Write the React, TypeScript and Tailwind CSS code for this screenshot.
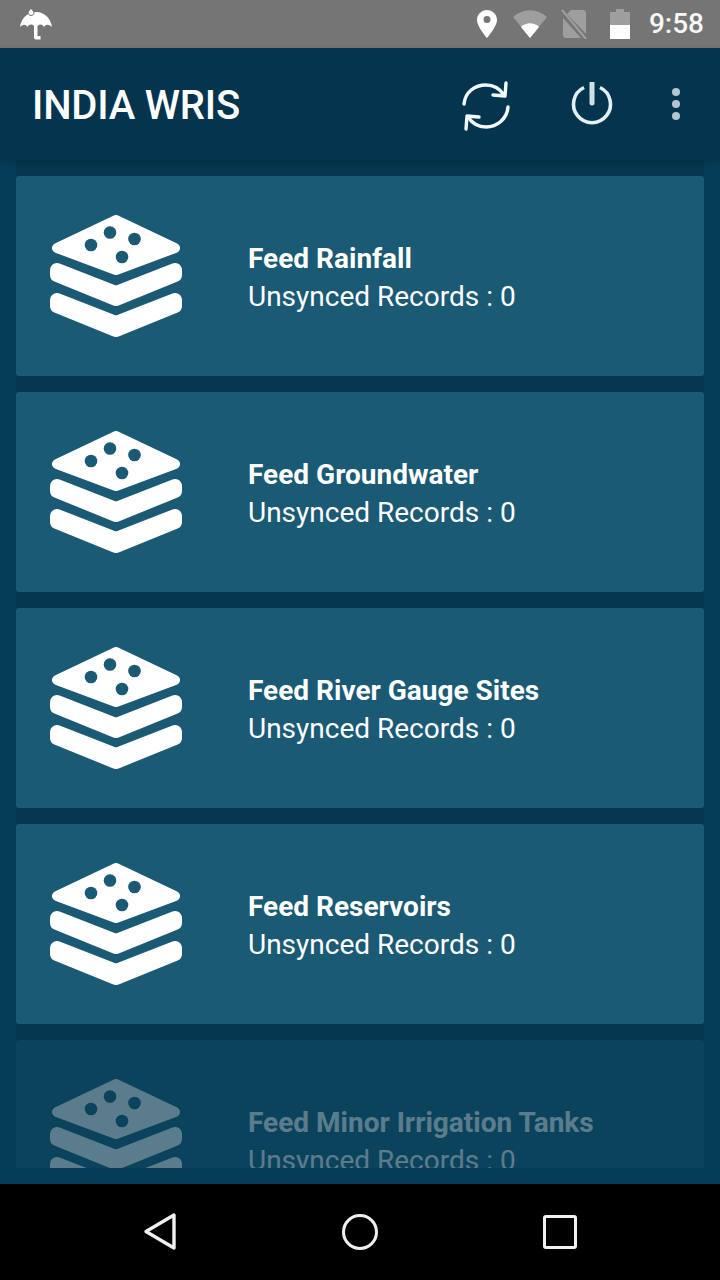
const feeds = [
  { title: "Feed Rainfall" },
  { title: "Feed Groundwater" },
  { title: "Feed River Gauge Sites" },
  { title: "Feed Reservoirs" },
  { title: "Feed Minor Irrigation Tanks", faded: true },
];

function LayersIcon() {
  return (
    <svg width="132" height="122" viewBox="0 0 132 122" className="shrink-0">
      <path d="M66 5 L125 33 L66 55 L7 33 Z" fill="#fff" stroke="#fff" strokeWidth="10" strokeLinejoin="round" />
      <circle cx="41" cy="30" r="6.3" fill="#1a5a75" />
      <circle cx="60" cy="17.5" r="6.3" fill="#1a5a75" />
      <circle cx="84.5" cy="24" r="6.3" fill="#1a5a75" />
      <circle cx="72" cy="42" r="6.3" fill="#1a5a75" />
      <path d="M7 55 L66 78 L125 55 L125 60 L66 84 L7 60 Z" fill="#fff" stroke="#fff" strokeWidth="14" strokeLinejoin="round" />
      <path d="M7 85 L66 108 L125 85 L125 91 L66 115 L7 91 Z" fill="#fff" stroke="#fff" strokeWidth="14" strokeLinejoin="round" />
    </svg>
  );
}

function FeedCard({ title, faded }: { title: string; faded?: boolean }) {
  return (
    <div className="shrink-0 bg-[#03364f] pt-4">
      <div className={`flex h-[200px] items-center rounded-[3px] bg-[#1a5a75] pl-[34px] ${faded ? "opacity-35" : ""}`}>
        <LayersIcon />
        <div className="mt-1 ml-[66px] flex flex-col text-white">
          <div className="text-[28px] leading-[38px] font-bold">{title}</div>
          <div className="text-[28px] leading-[38px]">Unsynced Records : 0</div>
        </div>
      </div>
    </div>
  );
}

function StatusBar() {
  return (
    <div className="flex h-12 shrink-0 items-center bg-[#757575] pr-4 pl-5 text-white">
      <svg width="32" height="32" viewBox="0 0 32 32" fill="#fff">
        <path d="M0 19 C1 11 7 4 16 4 C25 4 31 11 32 19 C29 16 26 16 24 19 C22 16 20 16 17.500 18 L17.500 28 L20.500 28 L20.500 31.500 L16 31.500 C14.500 31.500 14 30.500 14 29 L14 18 C12 16 9 16 7.500 19 C5.500 16 3 16 0 19 Z" />
        <path d="M11 0 C12.500 2.500 14 3.500 14 5 C14 6.500 12.500 7.500 11 7.500 C9.500 7.500 8 6.500 8 5 C8 3.500 9.500 2.500 11 0 Z" stroke="#757575" strokeWidth="1" />
      </svg>
      <div className="ml-auto flex items-center">
        <svg width="20" height="28" viewBox="0 0 20 28" fill="#fff">
          <path fillRule="evenodd" d="M10 0 C4.500 0 0 4.400 0 9.900 C0 16.500 10 28 10 28 C10 28 20 16.500 20 9.900 C20 4.400 15.500 0 10 0 Z M10 13 A3.500 3.500 0 1 1 10 6 A3.500 3.500 0 0 1 10 13 Z" />
        </svg>
        <svg width="34" height="28" viewBox="0 0 34 28" className="ml-[16px]">
          <path d="M0 7 C10 -2 24 -2 34 7 L17 28 Z" fill="#fff" fillOpacity="0.3" />
          <path d="M8 17 C13 12 21 12 26 17 L17 28 Z" fill="#fff" />
        </svg>
        <svg width="26" height="30" viewBox="0 0 26 30" className="ml-[14px]">
          <path d="M10 1 H22 A3 3 0 0 1 25 4 V25 L6 5 Z M2 9 L20 29 H5 A3 3 0 0 1 2 26 Z" fill="#fff" fillOpacity="0.3" />
          <path d="M1 1 L25 30" stroke="#fff" strokeOpacity="0.3" strokeWidth="2" />
        </svg>
        <svg width="20" height="30" viewBox="0 0 20 30" className="ml-[23px]">
          <path d="M6 0 H14 V3 H20 V30 H0 V3 H6 Z" fill="#fff" fillOpacity="0.3" />
          <path d="M0 16 H20 V30 H0 Z" fill="#fff" />
        </svg>
        <span className="ml-[19px] text-[28px] leading-none font-medium opacity-95">9:58</span>
      </div>
    </div>
  );
}

function AppBar() {
  return (
    <div className="z-10 flex h-[112px] shrink-0 items-center bg-[#04344e] pl-8 shadow-[0_2px_6px_rgba(0,0,0,0.18)]">
      <h1 className="mt-1 text-[40px] leading-none font-medium tracking-[-0.2px] text-white">INDIA WRIS</h1>
      <div className="ml-auto flex h-full items-center">
        <svg width="48" height="50" viewBox="0 0 48 50" fill="none" stroke="#f4fafc" strokeWidth="3.400" strokeLinecap="round" strokeLinejoin="round" className="mt-1 mr-[60px]">
          <path d="M2 23 C3 11 13 4 24 4 C32 4 38 8 42 14" />
          <path d="M44 2 L43 15 L31 14" />
          <path d="M46 26 C45 38 35 46 24 46 C16 46 10 42 6 36" />
          <path d="M4 48 L5 35 L17 36" />
        </svg>
        <svg width="44" height="44" viewBox="0 0 44 44" fill="none" stroke="#e3eff4" className="mr-[58px]">
          <path d="M14 5.500 A18.500 18.500 0 1 0 30 5.500" strokeWidth="3.600" />
          <path d="M22 1 V21" strokeWidth="5" strokeLinecap="round" stroke="#cfe0e8" />
        </svg>
        <div className="mr-10 flex flex-col gap-1">
          <span className="size-2 rounded-full bg-[#b5c5cf]" />
          <span className="size-2 rounded-full bg-[#b5c5cf]" />
          <span className="size-2 rounded-full bg-[#b5c5cf]" />
        </div>
      </div>
    </div>
  );
}

function NavBar() {
  return (
    <div className="flex h-24 shrink-0 items-center justify-center bg-black">
      <div className="flex w-[200px] justify-center">
        <svg width="36" height="40" viewBox="0 0 36 40" fill="none" stroke="#f0f0f0" strokeWidth="3.400" strokeLinejoin="round">
          <path d="M32 3 V36 L4 19.500 Z" />
        </svg>
      </div>
      <div className="flex w-[200px] justify-center">
        <span className="size-[36px] rounded-full border-[3.500px] border-[#f0f0f0]" />
      </div>
      <div className="flex w-[200px] justify-center">
        <span className="size-[34px] rounded-[3px] border-[3.500px] border-[#f0f0f0]" />
      </div>
    </div>
  );
}

export default function App() {
  return (
    <div className="flex h-[1280px] w-[720px] flex-col overflow-hidden font-['Roboto',sans-serif]">
      <StatusBar />
      <AppBar />
      <div className="flex min-h-0 flex-1 flex-col bg-[#053d56] px-4 pb-4">
        <div className="flex min-h-0 flex-1 flex-col overflow-hidden">
          {feeds.map((feed) => (
            <FeedCard key={feed.title} title={feed.title} faded={feed.faded} />
          ))}
        </div>
      </div>
      <NavBar />
    </div>
  );
}
